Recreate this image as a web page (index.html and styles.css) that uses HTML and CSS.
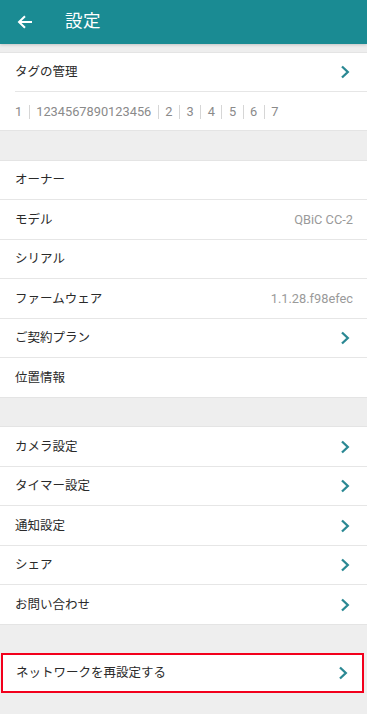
FILE: index.html
```html
<!DOCTYPE html>
<html lang="ja">
<head>
<meta charset="utf-8">
<title>設定</title>
<link rel="stylesheet" href="styles.css">
</head>
<body>
<header class="appbar">
  <svg class="back" width="16" height="14" viewBox="0 0 16 14"><path d="M15 7H2.5M8 1.2L2 7l6 5.8" fill="none" stroke="#fff" stroke-width="2"/></svg>
  <h1 class="title">設定</h1>
</header>
<main class="content">
  <section class="group inset">
    <div class="row">
      <span class="label">タグの管理</span>
      <svg class="chev" width="10" height="14" viewBox="0 0 10 14"><path d="M2 1.5L7.8 7 2 12.5" fill="none" stroke="#2a8893" stroke-width="2.3"/></svg>
    </div>
    <div class="row tags">
      <span>1</span><i class="bar"></i><span>1234567890123456</span><i class="bar"></i><span>2</span><i class="bar"></i><span>3</span><i class="bar"></i><span>4</span><i class="bar"></i><span>5</span><i class="bar"></i><span>6</span><i class="bar"></i><span>7</span>
    </div>
  </section>

  <section class="group">
    <div class="row"><span class="label">オーナー</span></div>
    <div class="row"><span class="label">モデル</span><span class="value">QBiC CC-2</span></div>
    <div class="row"><span class="label">シリアル</span></div>
    <div class="row"><span class="label">ファームウェア</span><span class="value">1.1.28.f98efec</span></div>
    <div class="row"><span class="label">ご契約プラン</span><svg class="chev" width="10" height="14" viewBox="0 0 10 14"><path d="M2 1.5L7.8 7 2 12.5" fill="none" stroke="#2a8893" stroke-width="2.3"/></svg></div>
    <div class="row"><span class="label">位置情報</span></div>
  </section>

  <section class="group">
    <div class="row"><span class="label">カメラ設定</span><svg class="chev" width="10" height="14" viewBox="0 0 10 14"><path d="M2 1.5L7.8 7 2 12.5" fill="none" stroke="#2a8893" stroke-width="2.3"/></svg></div>
    <div class="row"><span class="label">タイマー設定</span><svg class="chev" width="10" height="14" viewBox="0 0 10 14"><path d="M2 1.5L7.8 7 2 12.5" fill="none" stroke="#2a8893" stroke-width="2.3"/></svg></div>
    <div class="row"><span class="label">通知設定</span><svg class="chev" width="10" height="14" viewBox="0 0 10 14"><path d="M2 1.5L7.8 7 2 12.5" fill="none" stroke="#2a8893" stroke-width="2.3"/></svg></div>
    <div class="row"><span class="label">シェア</span><svg class="chev" width="10" height="14" viewBox="0 0 10 14"><path d="M2 1.5L7.8 7 2 12.5" fill="none" stroke="#2a8893" stroke-width="2.3"/></svg></div>
    <div class="row"><span class="label">お問い合わせ</span><svg class="chev" width="10" height="14" viewBox="0 0 10 14"><path d="M2 1.5L7.8 7 2 12.5" fill="none" stroke="#2a8893" stroke-width="2.3"/></svg></div>
  </section>

  <section class="group highlight">
    <div class="row"><span class="label">ネットワークを再設定する</span><svg class="chev" width="10" height="14" viewBox="0 0 10 14"><path d="M2 1.5L7.8 7 2 12.5" fill="none" stroke="#2a8893" stroke-width="2.3"/></svg></div>
  </section>
</main>
</body>
</html>
```

FILE: styles.css
```css
html, body {
  margin: 0;
  padding: 0;
}
body {
  background: #eeeeee;
  font-family: Roboto, "Noto Sans CJK JP", sans-serif;
  color: #2a2a2a;
  width: 367px;
  height: 714px;
  overflow: hidden;
}
.appbar {
  height: 43.5px;
  background: #1a8b93;
  display: flex;
  align-items: center;
  box-shadow: 0 1px 3px rgba(0,0,0,0.18);
  position: relative;
}
.back {
  margin-left: 17px;
  display: block;
}
.title {
  margin: 0 0 0 32px;
  font-size: 17.5px;
  font-weight: 400;
  color: #ffffff;
  letter-spacing: 0.5px;
  line-height: 1;
}
.content {
  padding-top: 8px;
  display: flex;
  flex-direction: column;
  gap: 28.5px;
}
.group {
  background: #ffffff;
  border-top: 1px solid #e4e4e4;
  border-bottom: 1px solid #e4e4e4;
}
.row {
  height: 38.5px;
  display: flex;
  align-items: center;
  justify-content: space-between;
  padding: 0 17px 0 15px;
}
.row + .row {
  border-top: 1px solid #e6e6e6;
}
.inset .row {
  margin-left: 15px;
  padding-left: 0;
}
.label {
  font-size: 12.5px;
  line-height: 1;
  color: #2a2a2a;
  padding-top: 1.5px;
}
.value {
  font-size: 12.8px;
  color: #9a9a9a;
  margin-right: -3px;
  padding-top: 1px;
}
.chev {
  display: block;
  margin-top: 1px;
}
.tags {
  justify-content: flex-start;
  font-size: 12.8px;
  color: #8a8a8a;
  height: 37px;
  padding-top: 1px;
}
.bar {
  display: inline-block;
  width: 1px;
  height: 14px;
  background: #d6d6d6;
  margin: 0 6.5px;
}
.highlight {
  border: 2px solid #f2001c;
  margin: 0 3px 0 1px;
}
.highlight .row {
  height: 35.5px;
  padding-left: 13px;
  padding-right: 14px;
}
```
